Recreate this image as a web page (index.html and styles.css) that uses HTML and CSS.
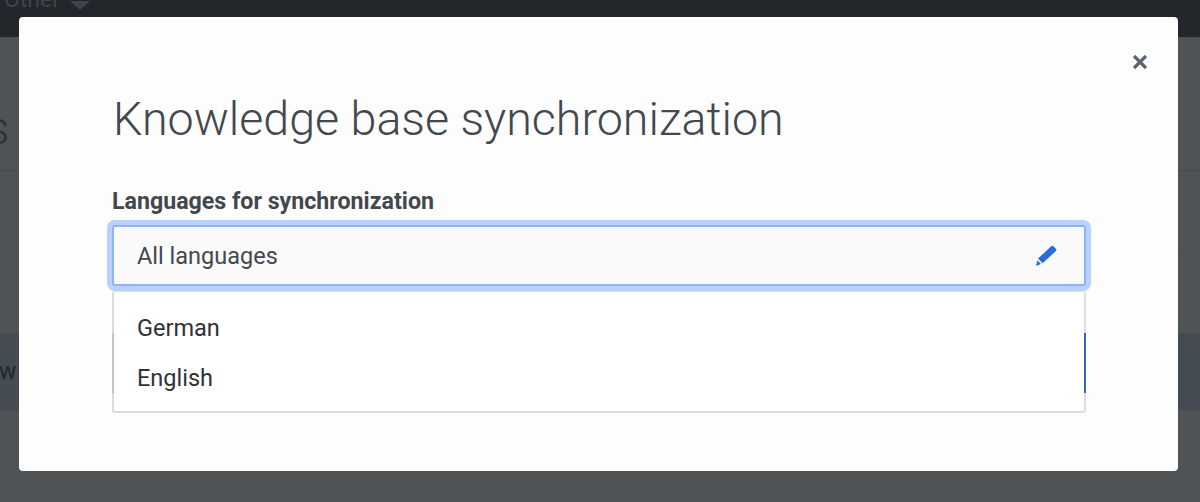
FILE: index.html
```html
<!DOCTYPE html>
<html lang="en">
<head>
<meta charset="utf-8">
<title>Knowledge base synchronization</title>
<link rel="stylesheet" href="styles.css">
</head>
<body>
<div class="page">
  <header class="topbar">
    <span class="topbar-item">Other</span>
    <span class="caret"></span>
  </header>
  <section class="page-head"><span class="page-title">s</span></section>
  <div class="page-row"></div>
  <div class="page-row-tall"></div>
  <div class="page-band"><span class="band-text">w</span></div>
</div>
<div class="modal" role="dialog">
  <button class="close" aria-label="Close">
    <svg viewBox="0 0 16 16" width="16" height="16"><path d="M2 2 14 14M14 2 2 14" fill="none" stroke="#5d6670" stroke-width="3.2"/></svg>
  </button>
  <h1 class="modal-title">Knowledge base synchronization</h1>
  <label class="field-label">Languages for synchronization</label>
  <div class="select">
    <span>All languages</span>
    <svg class="pencil" viewBox="0 0 22 22" width="22" height="22"><path d="M16.2 1.2a1.7 1.7 0 0 1 2.3 0l2.4 2.5a1.7 1.7 0 0 1 0 2.3L7.6 18.3 3 13.6Z" fill="#2b6cd8"/><path d="M2.4 15.2 6 19 1 21Z" fill="#2b6cd8"/></svg>
  </div>
  <ul class="menu">
    <li>German</li>
    <li>English</li>
  </ul>
  <div class="peek peek-left"></div>
  <div class="peek peek-right"></div>
</div>
</body>
</html>
```
FILE: styles.css
```css
* { box-sizing: border-box; }
html, body { margin: 0; height: 100%; }
body {
  width: 1200px;
  height: 502px;
  overflow: hidden;
  position: relative;
  background: #4f5356;
  font-family: Roboto, "Noto Sans", sans-serif;
}
.page { display: flex; flex-direction: column; height: 502px; }
.topbar {
  height: 37px;
  background: #23262b;
  display: flex;
  align-items: flex-end;
  gap: 10px;
  padding: 0 0 24px 4px;
  color: #3d444c;
  font-size: 23px;
  overflow: visible;
}
.topbar-item { line-height: 26px; }
.caret {
  width: 0; height: 0;
  border-left: 10px solid transparent;
  border-right: 10px solid transparent;
  border-top: 9px solid #3d444c;
  margin-bottom: 3px;
}
.page-head {
  height: 134px;
  border-bottom: 1px solid #474b4e;
  display: flex;
  align-items: flex-end;
  padding-bottom: 17px;
}
.page-title {
  font-size: 46px;
  font-weight: 300;
  line-height: 50px;
  color: #2e3237;
  margin-left: -14px;
}
.page-row { height: 82px; border-bottom: 1px solid #4a4e51; }
.page-row-tall { height: 80px; }
.page-band {
  height: 77px;
  background: #444b52;
  display: flex;
  align-items: center;
}
.band-text { font-size: 23px; color: #23262b; margin-left: -1px; }
.modal {
  position: absolute;
  left: 19px;
  top: 17px;
  width: 1159px;
  height: 454px;
  background: #fdfdfd;
  border-radius: 4px;
  padding: 72px 92px 0 93px;
}
.close {
  position: absolute;
  right: 30px;
  top: 37px;
  width: 16px;
  height: 16px;
  padding: 0;
  border: 0;
  background: none;
  display: flex;
}
.modal-title {
  margin: 0 0 0 1px;
  font-size: 46.6px;
  line-height: 60px;
  font-weight: 300;
  color: #43484f;
}
.field-label {
  display: block;
  margin-top: 39px;
  font-size: 23.2px;
  line-height: 26px;
  font-weight: 700;
  color: #43484f;
}
.select {
  position: relative;
  margin-top: 11px;
  height: 61px;
  width: 974px;
  background: #fafafa;
  border: 2px solid #8db4f7;
  border-radius: 3px;
  box-shadow: 0 0 0 5px #b9d2fd;
  display: flex;
  align-items: center;
  justify-content: space-between;
  padding: 0 27px 0 23px;
  font-size: 23.5px;
  color: #43484f;
}
.menu {
  list-style: none;
  margin: 5px 0 0;
  padding: 11px 23px 8px;
  width: 974px;
  height: 122px;
  background: #fff;
  border: 2px solid #dcdcdc;
  border-top-width: 1px;
  border-radius: 3px;
  font-size: 23.5px;
  line-height: 50px;
  color: #2f3236;
  position: relative;
  z-index: 1;
}
.peek {
  position: absolute;
  top: 316px;
  width: 2px;
  height: 60px;
  z-index: 2;
}
.peek-left { left: 93px; background: #bcc3ca; }
.peek-right { left: 1065px; background: #3365c2; }
```
